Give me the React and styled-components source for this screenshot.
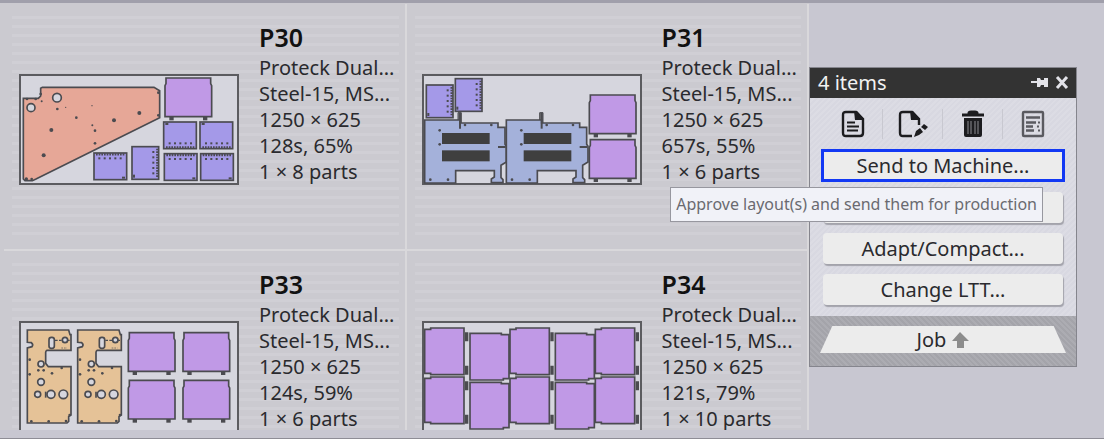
import React from 'react';
import styled, { createGlobalStyle } from 'styled-components';

const GlobalStyle = createGlobalStyle`
  * { box-sizing: border-box; }
  body {
    margin: 0;
    background: #c8c7d1;
    color: #2a2a2e;
    font-family: "Noto Sans", "Open Sans", sans-serif;
  }
`;

const Page = styled.div`
  display: flex;
  flex-direction: column;
  height: 100vh;
  overflow: hidden;
  border-top: 3px solid #a09fab;
  border-bottom: 1px solid #8e8d96;
`;

const Workspace = styled.div`
  display: flex;
  flex: 1;
  min-height: 0;
  padding-bottom: 8px;
`;

const LayoutGrid = styled.main`
  display: grid;
  flex: 1;
  min-width: 0;
  grid-template-columns: 1fr 1fr;
  grid-auto-rows: 247px;
  overflow: hidden;
  padding: 1px 0 0 4px;
  background: #cbcad0;
`;

const Card = styled.article`
  display: flex;
  gap: 20px;
  padding: 18px 8px 8px 15px;
  border-right: 2px solid #d9d8db;
  border-bottom: 2px solid #d9d8db;
  background: repeating-linear-gradient(#cbcad0 0 6px, #d0cfd5 6px 9px) 8px 6px / calc(100% - 14px) 225px no-repeat;
`;

const Thumb = styled.svg`
  flex: none;
  width: 220px;
  height: 111px;
  margin-top: 52px;
`;

const Details = styled.div`
  min-width: 0;
  font-size: 20px;
  line-height: 26px;
`;

const Title = styled.h2`
  margin: 0 0 3px;
  color: #111;
  font-size: 25px;
  line-height: 30px;
  font-weight: 600;
`;

const Line = styled.p`
  margin: 0;
  white-space: nowrap;
`;

const Side = styled.aside`
  flex: none;
  width: 295px;
  padding: 64px 27px 0 0;
`;

const Panel = styled.section`
  border: 1px solid #85858d;
`;

const PanelHeader = styled.header`
  display: flex;
  align-items: center;
  height: 30px;
  padding: 0 5px 0 8px;
  background: #333;
  color: #f2f2f2;
`;

const PanelTitle = styled.h3`
  flex: 1;
  margin: 0;
  font-size: 20px;
  font-weight: 400;
  line-height: 30px;
`;

const HeaderButton = styled.button`
  display: flex;
  padding: 0;
  margin-left: 4px;
  border: 0;
  background: none;
  color: #e2e2e8;
`;

const PanelBody = styled.div`
  padding: 11px;
  background: repeating-linear-gradient(135deg, #d8d8e1 0 2px, #dcdce4 2px 4px);
`;

const Tools = styled.div`
  display: grid;
  grid-template-columns: repeat(4, 1fr);
  height: 30px;
  margin: 0 2px 10px;
`;

const ToolButton = styled.button`
  display: flex;
  align-items: center;
  justify-content: center;
  padding: 0;
  border: 0;
  border-right: 1px solid #c8c8d0;
  background: none;
  color: #1c1c1f;
  &:last-child { border-right: 0; }
`;

const Actions = styled.div`
  position: relative;
  display: flex;
  flex-direction: column;
  gap: 10px;
`;

const ActionButton = styled.button`
  height: ${(p) => (p.$focused ? 33 : 31)}px;
  margin: ${(p) => (p.$focused ? '0' : '0 2px')};
  padding: 0;
  border: ${(p) => (p.$focused ? '3px solid #1238f4' : '0')};
  border-radius: ${(p) => (p.$focused ? 0 : 4)}px;
  box-shadow: ${(p) => (p.$focused ? 'none' : '1px 2px 1px #a3a3ab')};
  background: #ececec;
  color: #2a2a2e;
  font: 20px/24px "Noto Sans", "Open Sans", sans-serif;
`;

const Tooltip = styled.div`
  position: absolute;
  top: 38px;
  right: 22px;
  padding: 0 5px;
  border: 1px solid #97979f;
  background: #f1f2f8;
  color: #6a6a70;
  font-size: 16px;
  line-height: 33px;
  white-space: nowrap;
`;

const PanelFooter = styled.footer`
  padding: 10px 10px 13px;
  background: repeating-linear-gradient(45deg, #a4a4aa 0 2px, #acacb2 2px 4px);
`;

const JobButton = styled.button`
  display: flex;
  align-items: center;
  justify-content: center;
  gap: 6px;
  width: 100%;
  height: 27px;
  padding: 0;
  border: 0;
  background: #ececec;
  clip-path: polygon(5% 0, 95% 0, 100% 100%, 0 100%);
  color: #2a2a2e;
  font: 20px/27px "Noto Sans", "Open Sans", sans-serif;
`;

const INK = '#4b4b50';
const LILAC = '#c099e6';
const VIOLET = '#a499e8';

const times = (n) => Array.from({ length: n }, (_, i) => i);

function Sheet() {
  return <rect x="3" y="3" width="654" height="327" fill="#d6d6de" stroke="#5c5c60" strokeWidth="6" />;
}

function Plate({ x, y }) {
  return (
    <g transform={`translate(${x} ${y})`}>
      <rect x="14" y="116" width="13" height="14" fill={INK} />
      <rect x="115" y="116" width="13" height="14" fill={INK} />
      <path d="M4 3H138V20L141 26V119H1V26L4 20Z" fill={LILAC} stroke={INK} strokeWidth="5" />
    </g>
  );
}

/* A small bracket with a row of perforations along its bent edge. */
function Bracket({ x, y, turn = 0 }) {
  return (
    <g transform={`translate(${x} ${y}) rotate(${turn} 50 41)`}>
      <rect x="2" y="2" width="98" height="80" fill={VIOLET} stroke={INK} strokeWidth="5" />
      <path d="M8 6H95" stroke={INK} strokeWidth="7" strokeDasharray="5 3" />
      {times(5).map((i) => <rect key={i} x={15 + i * 16} y="15" width="6" height="6" fill={INK} />)}
      <rect x="86" y="73" width="9" height="6" fill={INK} />
    </g>
  );
}

function Chassis({ x }) {
  return (
    <g transform={`translate(${x} 0)`}>
      <path d="M102 116h10v48h-6v-24h-4z" fill="#77777c" stroke={INK} strokeWidth="3" />
      <path
        d="M2 138H108V147H222V160H243V211L247 217V264L231 274V311L237 317V326H202V315L211 309V290H95V327H2Z"
        fill="#a4b1da" stroke={INK} strokeWidth="5"
      />
      <path d="M108 116V164" stroke={INK} strokeWidth="6" />
      <rect x="54" y="177" width="143" height="33" fill="#3f3f3f" />
      <rect x="54" y="229" width="143" height="33" fill="#3f3f3f" />
      <path d="M222 219H245" stroke={INK} strokeWidth="6" />
      {[[47, 169], [47, 211], [123, 153], [202, 153], [19, 317], [72, 317]].map(([cx, cy]) => (
        <circle key={`${cx}-${cy}`} cx={cx} cy={cy} r="4" fill={INK} />
      ))}
    </g>
  );
}

function Flange({ x }) {
  return (
    <g transform={`translate(${x} 0)`} stroke={INK} strokeWidth="5">
      <path
        d="M3 27H127L131 41H134V88H62Q58 90 58 94V127L66 137H134V282L127 287V301L122 306H3V81L17 77Q22 71 15 65L3 64Z"
        fill="#e5c297"
      />
      <rect x="68" y="49" width="16" height="33" rx="7" fill="#d6d6de" />
      <path d="M86 58H132" strokeWidth="4" strokeDasharray="8 4" />
      <path d="M105 81H122" strokeWidth="2" strokeDasharray="5 3" />
      <g fill="#d6d6de">
        <circle cx="116" cy="57" r="8" />
        <circle cx="44" cy="129" r="9" />
        <circle cx="44" cy="183" r="10" />
        <circle cx="34" cy="220" r="9" />
        <circle cx="74" cy="220" r="12" />
        <circle cx="111" cy="220" r="13" />
      </g>
      <path d="M58 212V230" />
      <g fill={INK} stroke="none">
        {[[10, 116], [10, 160], [36, 148], [52, 148], [77, 157], [106, 141], [15, 301], [67, 301], [119, 300], [130, 282]].map(([cx, cy]) => (
          <circle key={`${cx}-${cy}`} cx={cx} cy={cy} r="4" />
        ))}
      </g>
    </g>
  );
}

function TurnedPlate({ x, y, flip = false }) {
  return (
    <g transform={`translate(${x} ${y})`}>
      {!flip && <path d="M129 16V43M129 116V143" stroke={INK} strokeWidth="10" />}
      <path
        d={flip ? 'M3 3H97V7H120V139H103V143H3Z' : 'M3 7H21V3H121V143H21V139H3Z'}
        fill={LILAC} stroke={INK} strokeWidth="5"
      />
    </g>
  );
}

function DrawingP30() {
  return (
    <>
      <path
        d="M13 73H58L65 66V43L70 40H405L422 50V131L51 315L40 320H18L13 315Z"
        fill="#e6a797" stroke={INK} strokeWidth="5"
      />
      <g fill="#d6d6de" stroke={INK} strokeWidth="5">
        <circle cx="36" cy="101" r="12" />
        <circle cx="114" cy="71" r="13" />
      </g>
      <g fill={INK}>
        {[[97, 168, 6], [74, 244, 6], [285, 139, 6], [361, 117, 6], [115, 105, 4], [172, 131, 4], [220, 154, 3], [228, 170, 4], [228, 208, 4], [68, 82, 3], [22, 315, 5], [38, 315, 4], [140, 100, 2], [219, 95, 2], [418, 56, 4], [418, 124, 4], [24, 75, 4], [50, 75, 4], [65, 60, 4]].map(([cx, cy, r]) => (
          <circle key={`${cx}-${cy}`} cx={cx} cy={cy} r={r} />
        ))}
      </g>
      <Plate x={437} y={9} />
      <Bracket x={434} y={144} turn={180} />
      <Bracket x={543} y={144} turn={180} />
      <Bracket x={434} y={237} />
      <Bracket x={543} y={237} />
      <Bracket x={223} y={235} />
      <Bracket x={330} y={225} turn={90} />
    </>
  );
}

function DrawingP31() {
  return (
    <>
      <Bracket x={4} y={40} turn={90} />
      <Bracket x={91} y={21} turn={90} />
      <Chassis x={6} />
      <Chassis x={251} />
      <Plate x={501} y={60} />
      <Plate x={501} y={194} />
    </>
  );
}

function DrawingP33() {
  return (
    <>
      <Flange x={22} />
      <Flange x={173} />
      {[32, 175].map((y) => [327, 491].map((x) => <Plate key={`${x}-${y}`} x={x} y={y} />))}
    </>
  );
}

function DrawingP34() {
  return (
    <>
      {[0, 147].map((y) => times(5).map((i) => (
        <TurnedPlate key={`${i}-${y}`} x={5 + i * 128 + (i % 2) * 8} y={18 + y + (i % 2) * 16} flip={i % 2 === 1} />
      )))}
    </>
  );
}

const LAYOUTS = [
  { id: 'P30', time: '128s, 65%', parts: '1 × 8 parts', Drawing: DrawingP30 },
  { id: 'P31', time: '657s, 55%', parts: '1 × 6 parts', Drawing: DrawingP31 },
  { id: 'P33', time: '124s, 59%', parts: '1 × 6 parts', Drawing: DrawingP33 },
  { id: 'P34', time: '121s, 79%', parts: '1 × 10 parts', Drawing: DrawingP34 },
];

function LayoutCard({ id, time, parts, Drawing }) {
  return (
    <Card>
      <Thumb viewBox="0 0 660 333" aria-hidden="true">
        <Sheet />
        <Drawing />
      </Thumb>
      <Details>
        <Title>{id}</Title>
        <Line>Proteck Dual...</Line>
        <Line>Steel-15, MS...</Line>
        <Line>1250 × 625</Line>
        <Line>{time}</Line>
        <Line>{parts}</Line>
      </Details>
    </Card>
  );
}

const DocumentIcon = () => (
  <svg width="24" height="28" viewBox="0 0 24 28" fill="none" stroke="currentColor" strokeWidth="2.4">
    <path d="M5 2H15L22 9V23Q22 26 19 26H5Q2 26 2 23V5Q2 2 5 2Z" />
    <path d="M13 1H16L23 9V10H14Z" fill="currentColor" stroke="none" />
    <path d="M6 12.500H14M6 16.500H18M6 20.500H17" strokeWidth="1.800" />
  </svg>
);

const EditIcon = () => (
  <svg width="30" height="28" viewBox="0 0 30 28" fill="none" stroke="currentColor" strokeWidth="2.4">
    <path d="M14 26H5Q2 26 2 23V5Q2 2 5 2H14L21 9V15" />
    <path d="M12 1H15L22 9V10H13Z" fill="currentColor" stroke="none" />
    <path d="M16 27L18 21L22 18L25 22L21 25ZM23 17L26 14L30 17L27 20Z" fill="currentColor" stroke="none" />
  </svg>
);

const TrashIcon = () => (
  <svg width="24" height="28" viewBox="0 0 24 28" fill="none" stroke="currentColor" strokeWidth="2">
    <path d="M1 5H23M8 5V3Q8 2 10 2H14Q16 2 16 3V5" strokeWidth="3" />
    <path d="M3 8H21V25Q21 27 19 27H5Q3 27 3 25Z" fill="currentColor" stroke="none" />
    <path d="M7 11V24M10 11V24M14 11V24M17 11V24" stroke="#8c8c92" strokeWidth="1" />
  </svg>
);

const ReportIcon = () => (
  <svg width="24" height="28" viewBox="0 0 24 28" fill="none" stroke="#5a5a60" strokeWidth="2.4">
    <rect x="2" y="2" width="20" height="24" rx="1" />
    <path d="M5 7.500H19M5 12.500H15M5 16.500H12M5 20.500H13" />
    <path d="M17 12.500H19M16 16.500H18M17 20.500H19" strokeWidth="2" />
  </svg>
);

const PinIcon = () => (
  <svg width="18" height="16" viewBox="0 0 18 16" fill="currentColor">
    <path d="M0 6H6V3H9L10 5H13V3H17V12H13V10H10L9 12H6V8H0Z" />
  </svg>
);

const CloseIcon = () => (
  <svg width="18" height="16" viewBox="0 0 18 16" stroke="currentColor" strokeWidth="3">
    <path d="M4 2L14 13M14 2L4 13" />
  </svg>
);

const UpIcon = () => (
  <svg width="17" height="16" viewBox="0 0 17 16" fill="#8c8c8c">
    <path d="M8 0L17 9H12V16H5V9H0Z" />
  </svg>
);

export default function App() {
  return (
    <>
      <GlobalStyle />
      <Page>
        <Workspace>
          <LayoutGrid>
            {LAYOUTS.map((layout) => <LayoutCard key={layout.id} {...layout} />)}
          </LayoutGrid>
          <Side>
            <Panel>
              <PanelHeader>
                <PanelTitle>4 items</PanelTitle>
                <HeaderButton aria-label="Pin"><PinIcon /></HeaderButton>
                <HeaderButton aria-label="Close"><CloseIcon /></HeaderButton>
              </PanelHeader>
              <PanelBody>
                <Tools>
                  <ToolButton aria-label="Document"><DocumentIcon /></ToolButton>
                  <ToolButton aria-label="Edit"><EditIcon /></ToolButton>
                  <ToolButton aria-label="Delete"><TrashIcon /></ToolButton>
                  <ToolButton aria-label="Report"><ReportIcon /></ToolButton>
                </Tools>
                <Actions>
                  <ActionButton $focused aria-describedby="send-tip">Send to Machine...</ActionButton>
                  <ActionButton aria-label="More" />
                  <ActionButton>Adapt/Compact...</ActionButton>
                  <ActionButton>Change LTT...</ActionButton>
                  <Tooltip role="tooltip" id="send-tip">Approve layout(s) and send them for production</Tooltip>
                </Actions>
              </PanelBody>
              <PanelFooter>
                <JobButton>Job <UpIcon /></JobButton>
              </PanelFooter>
            </Panel>
          </Side>
        </Workspace>
      </Page>
    </>
  );
}
